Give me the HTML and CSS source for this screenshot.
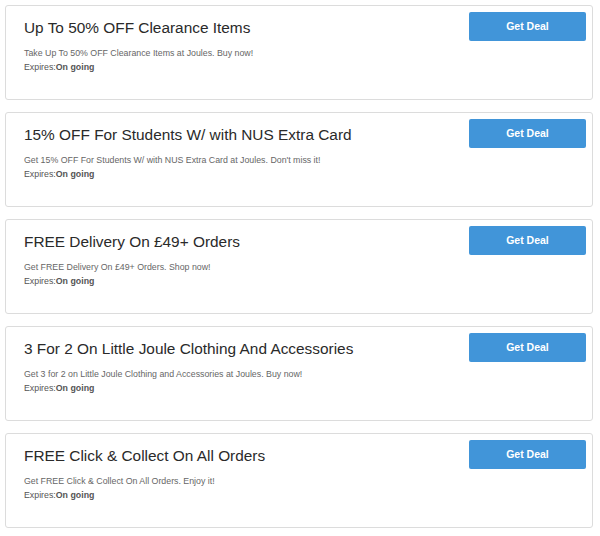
FILE: index.html
```html
<!DOCTYPE html>
<html lang="en">
<head>
    <meta charset="UTF-8">
    <meta name="viewport" content="width=device-width, initial-scale=1.0">
    <title>Joules Deals</title>
    <link rel="stylesheet" href="styles.css">
</head>
<body>
    <div class="deal">
        <div class="deal-info">
            <h2>Up To 50% OFF Clearance Items</h2>
            <p class="desc">Take Up To 50% OFF Clearance Items at Joules. Buy now!</p>
            <p class="expires">Expires:<b>On going</b></p>
        </div>
        <a class="deal-btn" href="#">Get Deal</a>
    </div>
    <div class="deal">
        <div class="deal-info">
            <h2>15% OFF For Students W/ with NUS Extra Card</h2>
            <p class="desc">Get 15% OFF For Students W/ with NUS Extra Card at Joules. Don't miss it!</p>
            <p class="expires">Expires:<b>On going</b></p>
        </div>
        <a class="deal-btn" href="#">Get Deal</a>
    </div>
    <div class="deal">
        <div class="deal-info">
            <h2>FREE Delivery On £49+ Orders</h2>
            <p class="desc">Get FREE Delivery On £49+ Orders. Shop now!</p>
            <p class="expires">Expires:<b>On going</b></p>
        </div>
        <a class="deal-btn" href="#">Get Deal</a>
    </div>
    <div class="deal">
        <div class="deal-info">
            <h2>3 For 2 On Little Joule Clothing And Accessories</h2>
            <p class="desc">Get 3 for 2 on Little Joule Clothing and Accessories at Joules. Buy now!</p>
            <p class="expires">Expires:<b>On going</b></p>
        </div>
        <a class="deal-btn" href="#">Get Deal</a>
    </div>
    <div class="deal">
        <div class="deal-info">
            <h2>FREE Click &amp; Collect On All Orders</h2>
            <p class="desc">Get FREE Click &amp; Collect On All Orders. Enjoy it!</p>
            <p class="expires">Expires:<b>On going</b></p>
        </div>
        <a class="deal-btn" href="#">Get Deal</a>
    </div>
</body>
</html>
```

FILE: styles.css
```css
body {
    font-family: "Liberation Sans", Arial, sans-serif;
    margin: 0;
    padding: 5px 7px 0 5px;
    background: #fff;
}
.deal {
    display: flex;
    justify-content: space-between;
    align-items: flex-start;
    height: 95px;
    box-sizing: border-box;
    border: 1px solid #dcdcdc;
    border-radius: 3px;
    margin-bottom: 12px;
    padding: 6px 6px 0 18px;
}
.deal h2 {
    font-size: 15.4px;
    line-height: 18px;
    font-weight: normal;
    color: #2a2a2a;
    margin: 7px 0 9px;
}
.deal p {
    margin: 0;
    font-size: 8.8px;
    line-height: 14px;
}
.desc {
    color: #666;
}
.expires {
    color: #555;
}
.deal-btn {
    display: block;
    width: 117px;
    height: 29px;
    line-height: 29px;
    text-align: center;
    background-color: #4195d9;
    color: #fff;
    font-size: 10.5px;
    font-weight: bold;
    text-decoration: none;
    border-radius: 2px;
    flex-shrink: 0;
}
```
